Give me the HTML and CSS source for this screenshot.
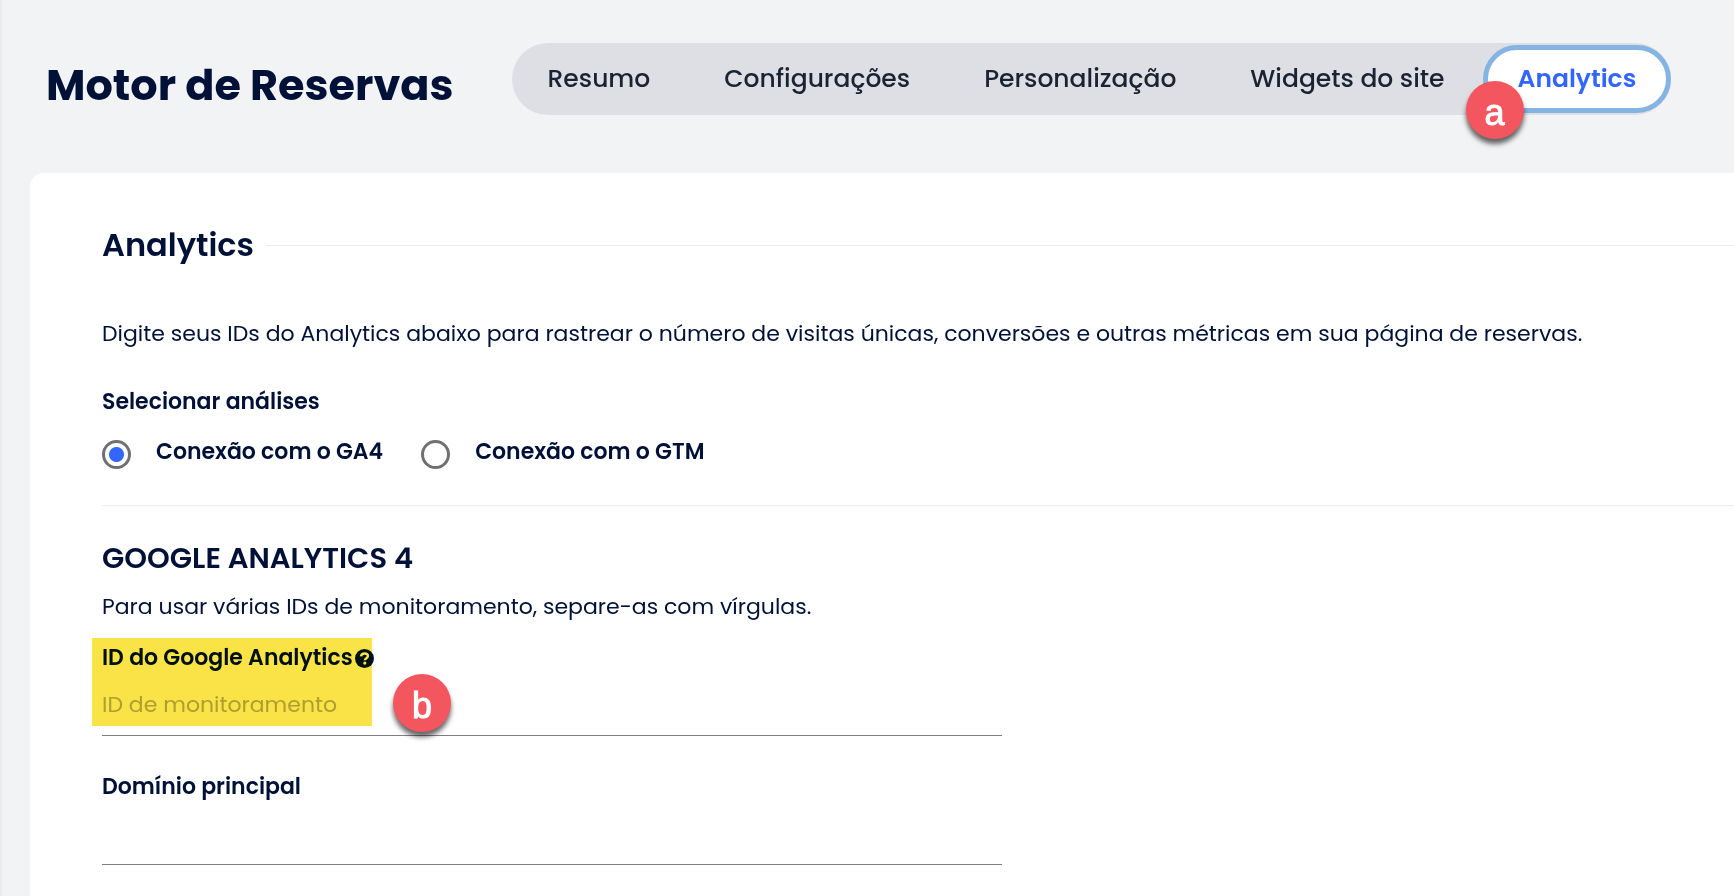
FILE: index.html
```html
<!DOCTYPE html>
<html lang="pt-BR">
<head>
  <meta charset="UTF-8" />
  <meta name="viewport" content="width=device-width, initial-scale=1" />
  <title>Motor de Reservas - Analytics</title>
  <link rel="stylesheet" href="styles.css">
</head>
<body>

<header>
  <h1>Motor de Reservas</h1>
  <nav class="tabs">
    <a href="#">Resumo</a>
    <a href="#">Configurações</a>
    <a href="#">Personalização</a>
    <a href="#">Widgets do site</a>
    <a href="#" class="active">Analytics<span class="marker marker-a">a</span></a>
  </nav>
</header>

<main class="card">
  <h2>Analytics</h2>
  <p class="intro">Digite seus IDs do Analytics abaixo para rastrear o número de visitas únicas, conversões e outras métricas em sua página de reservas.</p>

  <fieldset class="choices">
    <legend>Selecionar análises</legend>
    <div class="choice-row">
      <label class="choice"><input type="radio" name="analytics" checked>Conexão com o GA4</label>
      <label class="choice"><input type="radio" name="analytics">Conexão com o GTM</label>
    </div>
  </fieldset>

  <section class="ga4">
    <h3>GOOGLE ANALYTICS 4</h3>
    <p>Para usar várias IDs de monitoramento, separe-as com vírgulas.</p>

    <div class="field">
      <label for="ga-id">ID do Google Analytics
        <svg class="help" viewBox="0 0 20 20" aria-hidden="true">
          <circle cx="10" cy="10" r="10" fill="currentColor"/>
          <path d="M6.300 7.800C6.600 5.700 8 4.700 10.100 4.700c2.100 0 3.500 1.100 3.500 2.700 0 2.300-3.200 2.200-3.200 4.400" fill="none" stroke="#fff" stroke-width="2.500"/>
          <circle cx="10.300" cy="14.800" r="1.700" fill="#fff"/>
        </svg>
      </label>
      <input type="text" id="ga-id" placeholder="ID de monitoramento">
      <span class="highlight"></span>
      <span class="marker marker-b">b</span>
    </div>

    <div class="field">
      <label for="domain">Domínio principal</label>
      <input type="text" id="domain">
    </div>
  </section>
</main>

</body>
</html>
```
FILE: styles.css
```css
* { margin: 0; padding: 0; box-sizing: border-box; }
body { display: flex; flex-direction: column; min-height: 100vh; background: #f1f3f5; border-left: 2px solid #ebecef; color: #001138; font-family: Poppins, Inter, sans-serif; font-size: 22px; line-height: 32px; }

header { display: flex; align-items: center; gap: 58px; padding: 43px 24px 58px 44px; }
h1 { padding-top: 12px; font-size: 43px; line-height: 60px; font-weight: 700; white-space: nowrap; }

.tabs { display: flex; gap: 2px; height: 72px; border-radius: 36px; background: #dedfe5; white-space: nowrap; }
.tabs a { display: flex; align-items: center; padding: 0 36px; color: #1b2333; font-size: 25px; font-weight: 500; text-decoration: none; }
.tabs .active { position: relative; margin: 2px 0; padding: 0 30px; border: 5px solid #85b4e3; border-radius: 36px; background: #fff; color: #3366ff; font-weight: 600; }

/* lettered callouts */
.marker { position: absolute; width: 58px; height: 58px; border-radius: 50%; background: #f4565f; color: #fff; font: 36px/64px "Liberation Sans", Arial, sans-serif; -webkit-text-stroke: 1px #fff; text-align: center; box-shadow: 0 5px 5px rgba(0,0,0,0.6); }
.marker-a { left: -22px; top: 31px; }
.marker-b { left: 291px; top: 32px; }

.card { flex: 1; margin-left: 28px; padding: 48px 0 30px 72px; border-radius: 14px 0 0 0; background: #fff; }
h2 { display: flex; align-items: center; gap: 12px; font-size: 32px; line-height: 48px; font-weight: 600; }
h2::after { content: ""; flex: 1; height: 1px; background: #ededed; }
.intro { margin-top: 49px; }

.choices { margin-top: 36px; padding-bottom: 36px; border: 0; border-bottom: 1px solid #ededed; }
.choices legend { font-weight: 600; }
.choice-row { display: flex; gap: 38px; margin-top: 18px; }
.choice { display: flex; gap: 25px; font-weight: 600; }
.choice input { appearance: none; width: 29px; height: 29px; margin-top: 4px; border: 3px solid #707070; border-radius: 50%; background: #fff; }
.choice input:checked { background: radial-gradient(circle, #3366ff 7px, #fff 8px); }

.ga4 { margin-top: 32px; }
h3 { margin-bottom: 13px; font-size: 29px; line-height: 40px; font-weight: 600; }
.field { position: relative; max-width: 900px; margin-top: 19px; }
.field + .field { margin-top: 35px; }
.field label { display: flex; align-items: center; gap: 2px; font-weight: 600; }
.help { width: 19px; height: 19px; }
.field input { display: block; width: 100%; height: 54px; margin-top: 8px; padding-bottom: 8px; border: 0; border-bottom: 1px solid #808080; background: none; color: inherit; font: inherit; outline: none; }
.field input::placeholder { color: #b3b3b3; }
.highlight { position: absolute; left: -10px; top: -4px; width: 280px; height: 88px; background: #f9e346; mix-blend-mode: multiply; pointer-events: none; }
```
